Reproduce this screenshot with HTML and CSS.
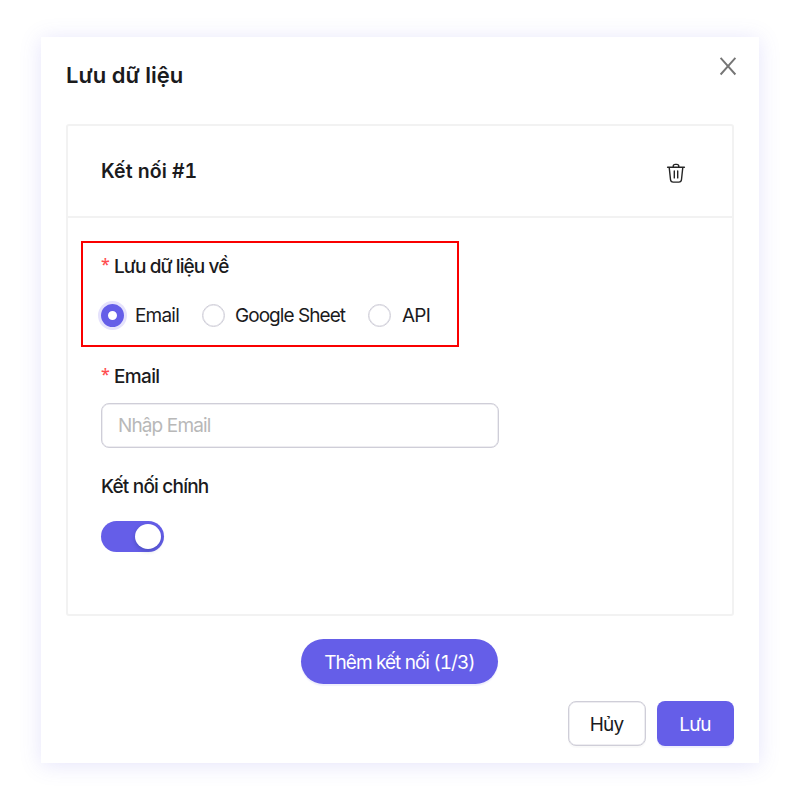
FILE: index.html
```html
<!DOCTYPE html>
<html lang="vi">
<head>
<meta charset="utf-8">
<title>Lưu dữ liệu</title>
<link rel="stylesheet" href="styles.css">
</head>
<body>
<main class="modal">
  <header class="modal-header">
    <h1 class="modal-title"><span>Lưu dữ liệu</span></h1>
    <button class="close" aria-label="Đóng"><svg width="18" height="20" viewBox="0 0 18 20"><path d="M1.600 1.900 16.400 18.500M16.400 1.900 1.600 18.500" fill="none" stroke="#757575" stroke-width="1.900"/></svg></button>
  </header>
  <section class="card">
    <div class="card-header">
      <h2 class="card-title"><span>Kết nối <span class="number">#1</span></span></h2>
      <svg class="trash" width="20" height="22" viewBox="0 0 20 22" fill="none" stroke="#252525" stroke-width="1.400" stroke-linecap="round" stroke-linejoin="round"><path d="M1.600 5.200H18.400M7.200 5V4.400a2 2 0 0 1 2-2h1.600a2 2 0 0 1 2 2V5M3.200 5.400l1.300 12.100c.2 1.700 1 2.600 2.700 2.600h5.600c1.700 0 2.500-.9 2.700-2.600l1.300-12.100M8.300 9v6.900M11.700 9v6.900"/></svg>
    </div>
    <div class="card-body">
      <div class="highlight">
        <div class="label required"><span class="tight-label">Lưu dữ liệu về</span></div>
        <div class="radios">
          <label class="radio"><i class="dot checked"></i><span>Email</span></label>
          <label class="radio"><i class="dot"></i><span class="google">Google Sheet</span></label>
          <label class="radio"><i class="dot"></i><span>API</span></label>
        </div>
      </div>
      <div class="fields">
        <div class="label required"><span class="email-label">Email</span></div>
        <div class="input"><span>Nhập Email</span></div>
        <div class="label main-label"><span>Kết nối chính</span></div>
        <div class="switch"><i class="knob"></i></div>
      </div>
    </div>
  </section>
  <button class="btn primary pill"><span>Thêm kết nối <span class="count">(1/3)</span></span></button>
  <footer class="footer">
    <button class="btn cancel"><span>Hủy</span></button>
    <button class="btn primary save"><span>Lưu</span></button>
  </footer>
</main>
</body>
</html>
```
FILE: styles.css
```css
* { box-sizing: border-box; }
body {
  margin: 0;
  padding: 37px 41px;
  height: 800px;
  overflow: hidden;
  background: #fff;
  color: #1b1b1d;
  font-family: Inter, "Liberation Sans", sans-serif;
  font-size: 19px;
  letter-spacing: -.8px;
}
span { white-space: nowrap; }
button { font: inherit; letter-spacing: inherit; padding: 0; }
.modal {
  display: flex;
  flex-direction: column;
  width: 718px;
  height: 726px;
  padding: 0 25px;
  background: #fff;
  box-shadow: 0 2px 20px rgba(101, 94, 232, .17);
}
.modal-header {
  display: flex;
  justify-content: space-between;
  height: 87px;
}
.modal-title { margin: 25px 0 0; font-size: 22px; line-height: 27px; font-weight: 600; letter-spacing: 0; }
.close { width: 18px; height: 20px; margin: 19px -3px 0 0; border: 0; background: none; }
.close svg { display: block; }
.card { height: 492px; border: 2px solid #f2f2f2; border-radius: 3px; }
.card-header {
  display: flex;
  align-items: center;
  justify-content: space-between;
  height: 92px;
  padding: 0 46px 0 33px;
  border-bottom: 2px solid #f2f2f2;
}
.card-title { margin: 0; font-size: 19.500px; line-height: 26px; font-weight: 600; letter-spacing: .1px; }
.number { letter-spacing: .1px; font-feature-settings: "tnum"; }
.trash { margin-top: 3px; }
.card-body { padding: 23px 13px 0; }
.highlight { width: 378px; height: 106px; padding: 10px 0 0 18px; border: 2px solid #fa0000; }
.label { display: flex; height: 26px; line-height: 28px; font-weight: 500; }
.required::before { content: "*"; width: 13px; color: #ff4d4f; font: 500 16px/23px "Noto Sans", sans-serif; letter-spacing: 0; }
.tight-label { letter-spacing: -.900px; }
.email-label { letter-spacing: -.650px; }
.radios { display: flex; height: 26px; margin-top: 23px; }
.radio { display: flex; align-items: center; }
.radio span { padding-top: 1px; }
.radio:nth-child(1) { width: 101px; }
.radio:nth-child(2) { width: 166px; }
.radio .google { margin-left: -1px; letter-spacing: -.950px; }
.dot { width: 23px; height: 23px; margin-right: 11px; border: 1px solid #cfced8; border-radius: 50%; flex: none; box-shadow: inset 0 0 0 .5px #dddce4; }
.checked { border: 7px solid #655ee8; box-shadow: 0 0 0 3px #e5e2fc; }
.fields { padding: 16px 0 0 20px; }
.input {
  display: flex;
  align-items: center;
  width: 398px;
  height: 45px;
  margin-top: 14px;
  padding: 0 0 0 16px;
  border: 1px solid #cfced8;
  box-shadow: inset 0 0 0 .5px #dddce4;
  border-radius: 8px;
  color: #b8b8b8;
}
.input span { letter-spacing: -.870px; }
.main-label { margin-top: 26px; line-height: 26px; }
.switch { display: flex; justify-content: flex-end; width: 63px; height: 31px; margin-top: 21px; padding: 3px; border-radius: 16px; background: #655ee8; }
.knob { width: 26px; height: 25px; border-radius: 50%; background: #fff; box-shadow: 0 2px 4px rgba(0, 35, 80, .25); }
.btn { display: flex; align-items: center; justify-content: center; height: 45px; border: 0; border-radius: 8px; }
.btn > span { margin-top: 2px; }
.primary { background: #655ee8; color: #fff; box-shadow: 0 2px 1px rgba(101, 94, 232, .1); }
.pill { width: 197px; margin: 23px 0 0 235px; border-radius: 23px; letter-spacing: -.980px; }
.count { letter-spacing: -1px; font-feature-settings: "tnum"; }
.footer { display: flex; justify-content: flex-end; gap: 11px; margin-top: 17px; }
.cancel { width: 78px; border: 1px solid #cfced8; background: #fff; color: #1b1b1d; box-shadow: inset 0 0 0 .5px #dddce4, 0 2px 1px rgba(0, 0, 0, .025); }
.cancel > span, .save > span { margin-left: -1px; }
.save { width: 77px; }
```
